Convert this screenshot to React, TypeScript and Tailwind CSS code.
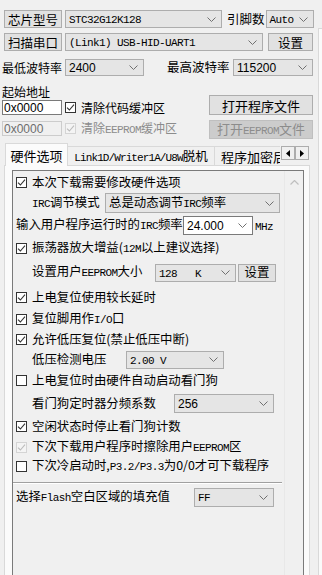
import React from "react";

const mono = "font-['Liberation_Mono','Noto_Sans_CJK_SC',monospace] text-[11px] tracking-[-0.6px]";
const sans = "font-['Liberation_Sans','Noto_Sans_CJK_SC',sans-serif] text-[12px]";

function M({ children }: { children: React.ReactNode }) {
  return <span className={`${mono} whitespace-pre`}>{children}</span>;
}

function S({ children }: { children: React.ReactNode }) {
  return <span className={`${sans} whitespace-pre`}>{children}</span>;
}

function Chevron() {
  return (
    <svg width="9" height="5" viewBox="0 0 9 5" className="shrink-0">
      <polyline points="0.5,0.5 4.5,4.5 8.5,0.5" fill="none" stroke="#707070" strokeWidth="1" />
    </svg>
  );
}

function Combo({ className, white, children }: { className: string; white?: boolean; children: React.ReactNode }) {
  return (
    <div
      className={`flex items-center justify-between border pl-[3px] pr-[5px] ${
        white ? "border-[#7a7a7a] bg-white" : "border-[#adadad] bg-[#e5e5e5]"
      } ${className}`}
    >
      <span className="whitespace-nowrap leading-[14px]">{children}</span>
      <Chevron />
    </div>
  );
}

function Btn({ className, disabled, children }: { className: string; disabled?: boolean; children: React.ReactNode }) {
  return (
    <div
      className={`flex items-center justify-center whitespace-nowrap border ${
        disabled ? "border-[#bfbfbf] bg-[#cccccc] text-[#8c8c8c]" : "border-[#adadad] bg-[#e1e1e1]"
      } ${className}`}
    >
      <span className="leading-[15px]">{children}</span>
    </div>
  );
}

function Cb({ checked, disabled }: { checked?: boolean; disabled?: boolean }) {
  return (
    <span
      className={`flex h-[11px] w-[11px] shrink-0 items-center justify-center border ${
        disabled ? "border-[#d4d4d4] bg-[#f4f4f4]" : "border-[#333333] bg-white"
      }`}
    >
      {checked && (
        <svg width="9" height="9" viewBox="0 0 9 9">
          <path d="M1 4.6 L3.4 7 L8 1.6" fill="none" stroke={disabled ? "#bcbcbc" : "#333333"} strokeWidth="1.1" />
        </svg>
      )}
    </span>
  );
}

function CbRow({ h, checked, disabled, children }: { h: string; checked?: boolean; disabled?: boolean; children: React.ReactNode }) {
  return (
    <div className={`flex items-center ${h}`}>
      <Cb checked={checked} disabled={disabled} />
      <span className="ml-[5px] whitespace-nowrap leading-[15px]">{children}</span>
    </div>
  );
}

function Arrow({ dir }: { dir: "l" | "r" }) {
  return (
    <div className="flex h-[14px] w-[14px] items-center justify-center border border-[#adadad] bg-[#f0f0f0]">
      <svg width="4" height="7" viewBox="0 0 4 7">
        {dir === "l" ? <polygon points="4,0 0,3.5 4,7" fill="#000" /> : <polygon points="0,0 4,3.5 0,7" fill="#000" />}
      </svg>
    </div>
  );
}

export default function App() {
  return (
    <div className="flex h-[575px] w-[322px] overflow-hidden bg-[#f0f0f0] font-['Noto_Sans_CJK_SC',sans-serif] text-[12px] leading-none text-black">
      <div className="flex w-[318px] shrink-0 flex-col">
        {/* chip row */}
        <div className="mt-[10px] flex h-[18px] pl-[4px]">
          <Btn className="w-[58px] text-[12.5px]">芯片型号</Btn>
          <Combo className="ml-[3px] w-[157px]">
            <M>STC32G12K128</M>
          </Combo>
          <span className="ml-[5px] flex items-center text-[12.5px]">引脚数</span>
          <Combo className="ml-[1px] w-[48px]">
            <M>Auto</M>
          </Combo>
        </div>

        {/* port row */}
        <div className="mt-[5px] flex h-[18px] pl-[4px]">
          <Btn className="w-[58px] text-[12.5px]">扫描串口</Btn>
          <Combo className="ml-[3px] w-[198px]">
            <M>(Link1) USB-HID-UART1</M>
          </Combo>
          <Btn className="ml-[5px] w-[45px] text-[12.5px]">设置</Btn>
        </div>

        {/* baud row */}
        <div className="mt-[8px] flex h-[19px] pl-[2px]">
          <span className="flex w-[60px] items-center whitespace-nowrap">最低波特率</span>
          <Combo className="ml-[3px] w-[79px]">
            <S>2400</S>
          </Combo>
          <span className="ml-[23px] flex w-[62px] items-center whitespace-nowrap text-[12.5px]">最高波特率</span>
          <Combo className="ml-[4px] w-[80px]">
            <S>115200</S>
          </Combo>
        </div>

        {/* address + files */}
        <div className="mt-[8px] flex">
          <div className="flex w-[209px] flex-col pl-[2px]">
            <span className="flex h-[15px] items-center">起始地址</span>
            <div className="mt-[1px] flex h-[15px] items-center">
              <div className="flex h-full w-[60px] items-center border border-[#7a7a7a] bg-white pl-[1px]">
                <S>0x0000</S>
              </div>
              <span className="ml-[3px]">
                <CbRow h="h-[15px]" checked>
                  清除代码缓冲区
                </CbRow>
              </span>
            </div>
            <div className="mt-[6px] flex h-[15px] items-center">
              <div className="flex h-full w-[60px] items-center border border-[#cccccc] bg-[#f0f0f0] pl-[1px] text-[#6d6d6d]">
                <S>0x0000</S>
              </div>
              <span className="ml-[3px] text-[#8c8c8c]">
                <CbRow h="h-[15px]" checked disabled>
                  清除<M>EEPROM</M>缓冲区
                </CbRow>
              </span>
            </div>
          </div>
          <div className="flex w-[104px] flex-col">
            <Btn className="mt-[11px] h-[20px] w-full text-[13px]">打开程序文件</Btn>
            <Btn className="mt-[5px] h-[19px] w-full text-[13px]" disabled>
              打开<M>EEPROM</M>文件
            </Btn>
          </div>
        </div>

        {/* tabs */}
        <div className="mt-[4px] flex h-[23px] items-end pl-[5px]">
          <div className="flex w-[275px] items-end overflow-hidden">
            <div className="z-10 flex h-[23px] w-[63px] shrink-0 items-center justify-center border border-b-0 border-[#d9d9d9] bg-[#fbfbfb] text-[13px]">
              硬件选项
            </div>
            <div className="flex h-[20px] w-[147px] shrink-0 items-center justify-center whitespace-nowrap border border-l-0 border-b-0 border-[#d9d9d9] bg-[#f0f0f0] text-[12.5px]">
              <span className="leading-[15px]">
                <span className="font-['Liberation_Mono',monospace] text-[11px] tracking-[-0.9px]">Link1D/Writer1A/U8W</span>脱机
              </span>
            </div>
            <div className="flex h-[20px] w-[80px] shrink-0 items-center whitespace-nowrap border border-l-0 border-b-0 border-[#d9d9d9] bg-[#f0f0f0] pl-[6px] text-[13px]">
              程序加密后
            </div>
          </div>
          <div className="mb-[6px] ml-px flex">
            <Arrow dir="l" />
            <Arrow dir="r" />
          </div>
        </div>

        {/* tab page */}
        <div className="-mt-px ml-[4px] h-[440px] w-[306px] shrink-0 border border-[#d9d9d9] bg-[#fbfbfb] pl-[7px] pr-[5px] pt-[4px]">
          <div className="flex h-[420px] border border-[#7a7a7a] bg-[#f0f0f0] text-[12.4px]">
            <div className="flex flex-1 flex-col pl-[3px]">
              <div className="mt-[1px]">
                <CbRow h="h-[20px]" checked>
                  本次下载需要修改硬件选项
                </CbRow>
              </div>
              <div className="flex h-[22px] items-center pl-[16px]">
                <span className="w-[66px] whitespace-nowrap leading-[15px]">
                  <M>IRC</M>调节模式
                </span>
                <Combo className="ml-[7px] h-[20px] w-[175px]">总是动态调节<M>IRC</M>频率</Combo>
              </div>
              <div className="flex h-[23px] items-center">
                <span className="w-[162px] whitespace-nowrap leading-[15px]">
                  输入用户程序运行时的<M>IRC</M>频率
                </span>
                <Combo className="ml-[5px] h-[19px] w-[70px]" white>
                  <S>24.000</S>
                </Combo>
                <span className="ml-[2px]">
                  <M>MHz</M>
                </span>
              </div>
              <CbRow h="h-[23px]" checked>
                振荡器放大增益(<M>12M</M>以上建议选择)
              </CbRow>
              <div className="flex h-[25px] items-center pl-[16px]">
                <span className="w-[108px] whitespace-nowrap leading-[15px]">
                  设置用户<M>EEPROM</M>大小
                </span>
                <Combo className="ml-[15px] h-[18px] w-[81px]">
                  <M>128   K</M>
                </Combo>
                <Btn className="ml-[2px] h-[18px] w-[38px]">设置</Btn>
              </div>
              <CbRow h="h-[24px]" checked>
                上电复位使用较长延时
              </CbRow>
              <CbRow h="h-[21px]" checked>
                复位脚用作<M>I/O</M>口
              </CbRow>
              <CbRow h="h-[19px]" checked>
                允许低压复位(禁止低压中断)
              </CbRow>
              <div className="flex h-[21px] items-center pl-[16px]">
                <span className="w-[72px] whitespace-nowrap leading-[15px]">低压检测电压</span>
                <Combo className="ml-[22px] h-[18px] w-[98px]">
                  <M>2.00 V</M>
                </Combo>
              </div>
              <CbRow h="h-[21px]">上电复位时由硬件自动启动看门狗</CbRow>
              <div className="flex h-[24px] items-center pl-[16px]">
                <span className="w-[120px] whitespace-nowrap leading-[15px]">看门狗定时器分频系数</span>
                <Combo className="ml-[22px] h-[19px] w-[100px]">
                  <S>256</S>
                </Combo>
              </div>
              <CbRow h="h-[23px]" checked>
                空闲状态时停止看门狗计数
              </CbRow>
              <CbRow h="h-[19px]" checked disabled>
                下次下载用户程序时擦除用户<M>EEPROM</M>区
              </CbRow>
              <CbRow h="h-[18px]">
                下次冷启动时,<M>P3.2/P3.3</M>为0/0才可下载程序
              </CbRow>
              <div className="-ml-[3px] mt-[7px] w-[269px] border-b border-t border-b-white border-t-[#a0a0a0]" />
              <div className="mt-[3px] flex h-[20px] items-center">
                <span className="w-[150px] whitespace-nowrap leading-[15px]">
                  选择<M>Flash</M>空白区域的填充值
                </span>
                <Combo className="ml-[28px] h-[19px] w-[80px]">
                  <M>FF</M>
                </Combo>
              </div>
            </div>
            <div className="flex w-[19px] shrink-0 justify-center border-l border-[#e8e8e8] bg-[#f0f0f0] pt-[9px]">
              <svg width="9" height="5" viewBox="0 0 9 5">
                <polyline points="0.5,4.5 4.5,0.5 8.5,4.5" fill="none" stroke="#bfbfbf" strokeWidth="1.2" />
              </svg>
            </div>
          </div>
        </div>
      </div>
      <div className="mt-[28px] flex-1 border-l border-t border-[#d9d9d9] bg-[#fafafa]" />
    </div>
  );
}
